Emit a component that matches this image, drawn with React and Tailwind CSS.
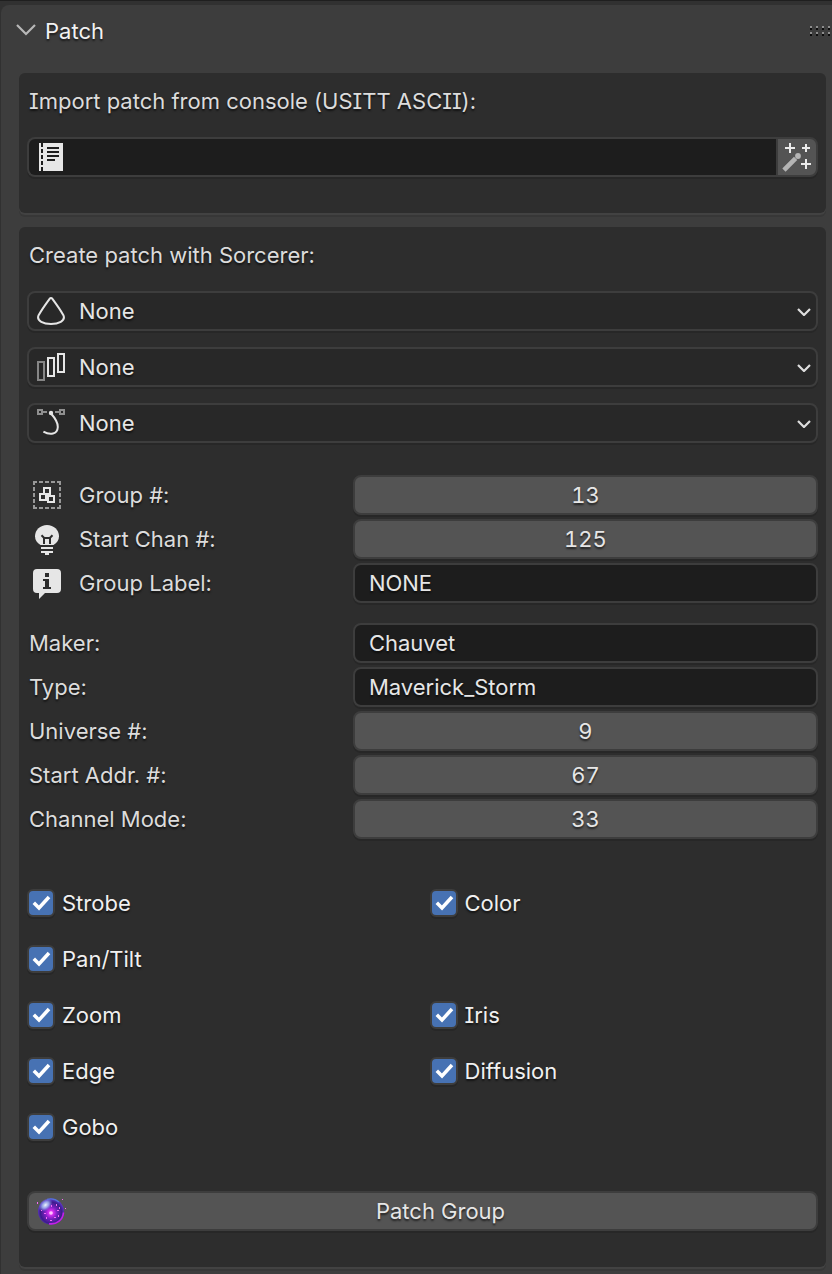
import { useId, useState } from "react";

const fieldFrame =
  "h-10 w-full min-w-0 rounded-lg border-2 border-[#3d3d3d] shadow-[0_2px_0_#272727] outline-none";
const embossed = "[text-shadow:0_2px_2px_rgba(0,0,0,0.6)]";

function ChevronIcon({ className, width, height, points, stroke }) {
  return (
    <svg className={className} width={width} height={height} fill="none" stroke={stroke} strokeWidth="2.2" aria-hidden="true">
      <polyline points={points} />
    </svg>
  );
}

function GripIcon() {
  return (
    <svg width="22" height="10" shapeRendering="crispEdges" aria-hidden="true">
      {[0, 6, 12, 18].map((x) => (
        <g key={x}>
          <rect x={x} y="0" width="2" height="2" fill="#8e8e8e" />
          <rect x={x} y="2" width="2" height="2" fill="#0c0c0c" />
          <rect x={x} y="6" width="2" height="2" fill="#8e8e8e" />
          <rect x={x} y="8" width="2" height="2" fill="#0c0c0c" />
        </g>
      ))}
    </svg>
  );
}

function TextIcon() {
  return (
    <svg width="24" height="28" shapeRendering="crispEdges" aria-hidden="true">
      <rect width="24" height="28" fill="#e6e6e6" />
      <g fill="#1d1d1d">
        <rect x="2" y="0" width="2" height="4" />
        <rect x="2" y="6" width="2" height="4" />
        <rect x="2" y="12" width="2" height="4" />
        <rect x="2" y="18" width="2" height="4" />
        <rect x="2" y="24" width="2" height="4" />
        <rect x="8" y="4" width="12" height="2" />
        <rect x="8" y="8" width="12" height="2" />
        <rect x="8" y="12" width="12" height="2" />
        <rect x="8" y="16" width="8" height="2" />
      </g>
    </svg>
  );
}

function WandIcon() {
  return (
    <svg width="32" height="32" fill="none" aria-hidden="true">
      <path d="M9 2v10M4 7h10M25 3v8M21 7h8M25 18v10M20 23h10" stroke="#ececec" strokeWidth="2" />
      <path d="M4.600 27.400l8.400-8.400" stroke="#b4b4b4" strokeWidth="4.600" strokeLinecap="square" />
      <circle cx="17" cy="15" r="2.900" fill="#b4b4b4" />
    </svg>
  );
}

function ConeIcon() {
  return (
    <svg width="28" height="28" fill="none" stroke="#e6e6e6" strokeWidth="2" aria-hidden="true">
      <path d="M12.600 1.800Q14 .4 15.400 1.800C18.500 6 23.500 13 26.400 18.200C29 24 21 27 14 27S-1 24 1.600 18.200C4.500 13 9.500 6 12.600 1.800Z" />
    </svg>
  );
}

function BarsIcon() {
  return (
    <svg width="28" height="28" fill="none" strokeWidth="2" shapeRendering="crispEdges" aria-hidden="true">
      <rect x="1" y="9" width="6" height="18" stroke="#868686" />
      <rect x="11" y="5" width="6" height="18" stroke="#e6e6e6" />
      <rect x="21" y="1" width="6" height="18" stroke="#e6e6e6" />
    </svg>
  );
}

function CurveIcon() {
  return (
    <svg width="28" height="28" fill="none" strokeWidth="2" aria-hidden="true">
      <g stroke="#8f8f8f">
        <rect x="1" y="1" width="4" height="4" />
        <rect x="23" y="1" width="4" height="4" />
        <path d="M6 3h4M18 3h4" />
      </g>
      <circle cx="14" cy="4" r="2.200" fill="#e6e6e6" />
      <path d="M14 4.500C18 9 21 13.500 20.800 18C20.500 25.500 13 26.500 6.400 22.600" stroke="#e6e6e6" />
    </svg>
  );
}

function GroupIcon() {
  return (
    <svg width="28" height="28" fill="none" strokeWidth="2" shapeRendering="crispEdges" aria-hidden="true">
      <path d="M0 1H28M0 27H28M1 0V28M27 0V28" stroke="#989898" strokeDasharray="4 2" />
      <g stroke="#e6e6e6">
        <rect x="11" y="7" width="6" height="6" />
        <rect x="7" y="13" width="6" height="6" />
        <rect x="15" y="15" width="6" height="6" />
      </g>
    </svg>
  );
}

function BulbIcon() {
  return (
    <svg width="28" height="32" aria-hidden="true">
      <g transform="translate(0 2)">
        <path d="M14 0C20.800 0 26 5 26 11.200C26 15 24 18 20.500 20H7.500C4 18 2 15 2 11.200C2 5 7.200 0 14 0Z" fill="#e6e6e6" />
        <path d="M8.500 10.200L11.200 13H16.800L19.500 10.200M11 13V19M17 13V19" fill="none" stroke="#2d2d2d" strokeWidth="2" />
        <path d="M8 22h12v2H8zM8 26h12v2H8zM12 28h4v2h-4z" fill="#e6e6e6" />
      </g>
    </svg>
  );
}

function InfoIcon() {
  return (
    <svg width="28" height="32" aria-hidden="true">
      <g transform="translate(0 2)">
        <path d="M4 0H24Q28 0 28 4V20Q28 24 24 24H12L6 30V24H4Q0 24 0 20V4Q0 0 4 0Z" fill="#e6e6e6" />
        <path d="M12 4h4v4h-4zM10 10h6v8h2v2h-8v-2h2v-6h-2z" fill="#2d2d2d" />
      </g>
    </svg>
  );
}

function OrbIcon() {
  return (
    <svg width="30" height="28" aria-hidden="true">
      <defs>
        <radialGradient id="orb-body" cx="0.5" cy="0.55" r="0.52">
          <stop offset="0" stopColor="#ff7dff" />
          <stop offset="0.18" stopColor="#d42df0" />
          <stop offset="0.45" stopColor="#7a1fc0" />
          <stop offset="0.78" stopColor="#3d1b8c" />
          <stop offset="1" stopColor="#5b34c4" />
        </radialGradient>
        <radialGradient id="orb-shine">
          <stop offset="0" stopColor="#f0f8ff" />
          <stop offset="0.5" stopColor="#a3b8f6" stopOpacity="0.8" />
          <stop offset="1" stopColor="#7b7be8" stopOpacity="0" />
        </radialGradient>
      </defs>
      <circle cx="14" cy="14.500" r="13" fill="url(#orb-body)" />
      <ellipse cx="8.500" cy="8" rx="8" ry="5.500" transform="rotate(-40 8.500 8)" fill="url(#orb-shine)" />
      <path d="M12 26.700C20 28 26 22.500 26.500 15.500" fill="none" stroke="#c51fe8" strokeWidth="1.600" />
      <path d="M10 2.300Q17 .5 22 5" fill="none" stroke="#5574d8" strokeWidth="1.200" />
      <circle cx="14" cy="16" r="1.800" fill="#ffc4ff" />
      <g fill="#f46cf4">
        <rect x="0" y="5" width="1" height="2" />
        <rect x="25" y="2" width="1" height="1" />
        <rect x="28" y="11" width="1" height="1" />
        <rect x="19" y="7" width="1" height="2" />
        <rect x="14" y="8" width="1" height="2" />
        <rect x="7" y="16" width="2" height="1" />
        <rect x="9" y="20" width="1" height="2" />
        <rect x="20" y="13" width="2" height="1" />
        <rect x="22" y="10" width="1" height="2" />
        <rect x="17" y="20" width="2" height="1" />
        <rect x="21" y="18" width="1" height="2" />
        <rect x="13" y="23" width="2" height="1" />
        <rect x="4" y="13" width="1" height="1" />
      </g>
    </svg>
  );
}

function Box({ children }) {
  return (
    <section className="rounded-md bg-[#2d2d2d] px-2 pt-2 pb-9 shadow-[0_2px_0_#424242,0_4px_0_#373737]">
      {children}
    </section>
  );
}

function IconSelect({ label, icon }) {
  return (
    <div className="relative">
      <span className="pointer-events-none absolute inset-y-0 left-2.5 flex items-center">{icon}</span>
      <select aria-label={label} className={`${fieldFrame} ${embossed} block appearance-none bg-[#282828] pr-8 pl-[50px] text-[#e6e6e6]`}>
        <option>None</option>
      </select>
      <span className="pointer-events-none absolute inset-y-0 right-[7px] flex items-center">
        <ChevronIcon width="14" height="8" points="1,1 7,7 13,1" stroke="#dedede" className="mt-0.5" />
      </span>
    </div>
  );
}

function Field({ label, icon, value, numeric }) {
  const id = useId();
  return (
    <div className="grid grid-cols-[41.2%_1fr] items-center">
      <label htmlFor={id} className={`flex items-center text-[#dcdcdc] ${icon ? "gap-[18px] pl-1.5" : "pl-0.5"}`}>
        {icon}
        {label}
      </label>
      <input
        id={id}
        type="text"
        inputMode={numeric ? "numeric" : "text"}
        defaultValue={value}
        className={`${fieldFrame} ${embossed} text-[#e6e6e6] ${numeric ? "bg-[#545454] text-center tabular-nums" : "bg-[#1d1d1d] px-3.5"}`}
      />
    </div>
  );
}

function Toggle({ label }) {
  const [on, setOn] = useState(true);
  return (
    <label className="flex h-10 items-center gap-[7px] text-[#f0f0f0]">
      <span className="relative flex size-7">
        <input
          type="checkbox"
          checked={on}
          onChange={() => setOn(!on)}
          className="size-7 appearance-none rounded-md border-2 border-[#3d3d3d] bg-[#545454] shadow-[0_2px_0_#272727] checked:bg-[#4772b3]"
        />
        {on && (
          <svg className="pointer-events-none absolute inset-0" width="28" height="28" fill="none" stroke="#fff" strokeWidth="3.500" aria-hidden="true">
            <path d="M6.800 13.800L12 19L22 8" />
          </svg>
        )}
      </span>
      {label}
    </label>
  );
}

export default function App() {
  return (
    <main
      className={`min-h-screen border-t border-[#1f1f1f] bg-[#313131] pt-1 pl-px font-[Inter,sans-serif] text-[22px] leading-7 [font-feature-settings:'cv08','calt'_0] ${embossed}`}
    >
      <div className="min-h-[calc(100vh-5px)] rounded-tl-lg bg-[#3d3d3d] pb-[7px]">
        <header className="flex h-[52px] items-center justify-between pl-[15px]">
          <button type="button" aria-expanded="true" className={`flex items-center gap-[9px] text-[#f2f2f2] ${embossed}`}>
            <ChevronIcon width="20" height="12" points="1,1 10,10 19,1" stroke="#b8b8b8" className="mb-0.5" />
            Patch
          </button>
          <GripIcon />
        </header>

        <div className="flex flex-col gap-3.5 pt-4 pr-1.5 pl-[18px]">
          <Box>
            <label htmlFor="import-patch" className="flex h-10 items-center pl-0.5 text-[#dcdcdc]">
              Import patch from console (USITT ASCII):
            </label>
            <div className="relative mt-4 flex">
              <span className="pointer-events-none absolute inset-y-0 left-3 flex items-center">
                <TextIcon />
              </span>
              <input
                id="import-patch"
                type="text"
                className="h-10 min-w-0 flex-1 rounded-l-lg border-2 border-r-0 border-[#3d3d3d] bg-[#1d1d1d] pl-12 text-[#e6e6e6] shadow-[0_2px_0_#272727] outline-none"
              />
              <button
                type="button"
                aria-label="Import patch"
                className="flex h-10 w-[42px] items-center justify-center rounded-r-lg border-2 border-[#3d3d3d] bg-[#545454] shadow-[0_2px_0_#272727]"
              >
                <WandIcon />
              </button>
            </div>
          </Box>

          <Box>
            <h2 className="flex h-10 items-center pl-0.5 text-[#dcdcdc]">Create patch with Sorcerer:</h2>
            <div className="mt-4 flex flex-col gap-4">
              <IconSelect label="Mesh" icon={<ConeIcon />} />
              <IconSelect label="Array" icon={<BarsIcon />} />
              <IconSelect label="Curve" icon={<CurveIcon />} />
            </div>

            <div className="mt-8 flex flex-col gap-1">
              <Field label="Group #:" icon={<GroupIcon />} value="13" numeric />
              <Field label="Start Chan #:" icon={<BulbIcon />} value="125" numeric />
              <Field label="Group Label:" icon={<InfoIcon />} value="NONE" />
            </div>

            <div className="mt-5 flex flex-col gap-1">
              <Field label="Maker:" value="Chauvet" />
              <Field label="Type:" value="Maverick_Storm" />
              <Field label="Universe #:" value="9" numeric />
              <Field label="Start Addr. #:" value="67" numeric />
              <Field label="Channel Mode:" value="33" numeric />
            </div>

            <div className="mt-11 flex flex-col gap-4">
              <div className="grid grid-cols-2 gap-x-3.5 gap-y-4">
                <Toggle label="Strobe" />
                <Toggle label="Color" />
              </div>
              <Toggle label="Pan/Tilt" />
              <div className="grid grid-cols-2 gap-x-3.5 gap-y-4">
                <Toggle label="Zoom" />
                <Toggle label="Iris" />
                <Toggle label="Edge" />
                <Toggle label="Diffusion" />
              </div>
              <Toggle label="Gobo" />
            </div>

            <button type="button" className={`${fieldFrame} ${embossed} mt-11 flex items-center bg-[#545454] pr-0.5 pl-2 text-[#e6e6e6]`}>
              <OrbIcon />
              <span className="flex-1 text-center">Patch Group</span>
            </button>
          </Box>
        </div>
      </div>
    </main>
  );
}
